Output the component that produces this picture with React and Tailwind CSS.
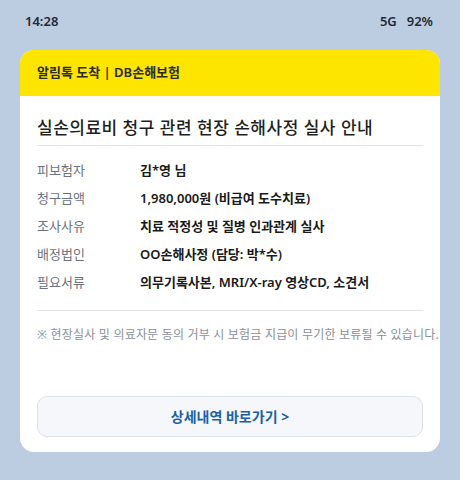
const rows = [
  ['피보험자', '김*영 님'],
  ['청구금액', '1,980,000원 (비급여 도수치료)'],
  ['조사사유', '치료 적정성 및 질병 인과관계 실사'],
  ['배정법인', 'OO손해사정 (담당: 박*수)'],
  ['필요서류', '의무기록사본, MRI/X-ray 영상CD, 소견서'],
];

export default function App() {
  return (
    <div
      className="w-[460px] h-[480px] bg-[#bccde1] overflow-hidden"
      style={{ fontFamily: '"Noto Sans", "Noto Sans CJK KR", sans-serif' }}
    >
      {/* status bar */}
      <div className="h-[44px] px-[25px] flex items-center justify-between text-[13px] font-semibold text-[#1f2937]">
        <span>14:28</span>
        <div className="flex gap-[10px] pr-[2px]">
          <span>5G</span>
          <span>92%</span>
        </div>
      </div>

      <div className="mx-5 mt-[6px] rounded-[14px] bg-white overflow-hidden">
        <div className="h-[46px] bg-[#fee500] px-[17px] flex items-center text-[13px] font-semibold text-[#2a2a2a]">
          알림톡 도착 | DB손해보험
        </div>

        <div className="px-[17px] pt-5 pb-[15px]">
          <h1 className="text-[17px] leading-[24px] font-medium tracking-[0.5px] text-[#1f1f1f] pb-[5px] border-b border-[#e5e7eb]">
            실손의료비 청구 관련 현장 손해사정 실사 안내
          </h1>

          <div className="mt-[11px] mb-[13px]">
            {rows.map(([label, value]) => (
              <div key={label} className="h-[28px] flex items-center text-[13px]">
                <span className="w-[103px] shrink-0 text-[#6b7280]">{label}</span>
                <span className="font-semibold text-[#1a1a1a]">{value}</span>
              </div>
            ))}
          </div>

          <div className="border-t border-[#e5e7eb] pt-[15px]">
            <p className="text-[12px] leading-[18px] tracking-[0.2px] text-[#8a8f98] whitespace-nowrap">
              ※ 현장실사 및 의료자문 동의 거부 시 보험금 지급이 무기한 보류될 수 있습니다.
            </p>
          </div>

          <button className="mt-[52px] w-full h-[41px] rounded-[10px] border border-[#dde2ea] bg-[#f5f7fa] text-[14px] font-bold text-[#1c5fa6]">
            상세내역 바로가기 &gt;
          </button>
        </div>
      </div>
    </div>
  );
}
